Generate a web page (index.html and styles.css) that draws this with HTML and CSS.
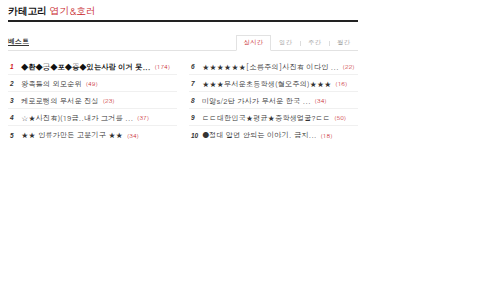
FILE: index.html
```html
<!DOCTYPE html>
<html lang="ko">
<head>
  <meta charset="UTF-8" />
  <title>카테고리 엽기&호러</title>
  <link rel="stylesheet" href="styles.css">
</head>
<body>
  <div class="wrap">
    <h1 class="cate-title">카테고리 <span class="cate-name">엽기&amp;호러</span></h1>

    <div class="best-head">
      <h2 class="best-title">베스트</h2>
      <ul class="tabs">
        <li class="tab on">실시간</li>
        <li class="tab">일간</li>
        <li class="tab">주간</li>
        <li class="tab">월간</li>
      </ul>
    </div>

    <div class="best-list">
      <ol class="col">
        <li class="row top"><em class="num">1</em><span class="subj">◆환◆공◆포◆증◆있는사람 이거 못...</span><span class="cnt">(174)</span></li>
        <li class="row"><em class="num">2</em><span class="subj">왕족들의 외모순위</span><span class="cnt">(49)</span></li>
        <li class="row"><em class="num">3</em><span class="subj">케로로뻥의 무서운 진실</span><span class="cnt">(23)</span></li>
        <li class="row"><em class="num">4</em><span class="subj">☆★사진有)(19금..내가 그거를 ...</span><span class="cnt">(37)</span></li>
        <li class="row"><em class="num">5</em><span class="subj">★★ 인류가만든 고문기구 ★★</span><span class="cnt">(34)</span></li>
      </ol>
      <ol class="col">
        <li class="row"><em class="num">6</em><span class="subj">★★★★★★[소름주의]사진有 이다인 ...</span><span class="cnt">(22)</span></li>
        <li class="row"><em class="num">7</em><span class="subj">★★★무서운초등학생(혐오주의)★★★</span><span class="cnt">(16)</span></li>
        <li class="row"><em class="num">8</em><span class="subj">미앓s/2탄 가사가 무서운 한국 ...</span><span class="cnt">(34)</span></li>
        <li class="row"><em class="num">9</em><span class="subj">ㄷㄷ대한민국★평균★중학생얼굴?ㄷㄷ</span><span class="cnt">(50)</span></li>
        <li class="row"><em class="num">10</em><span class="subj">●절대 알면 안되는 이야기. 금지...</span><span class="cnt">(18)</span></li>
      </ol>
    </div>
  </div>
</body>
</html>
```

FILE: styles.css
```css
body { margin: 0; font-family: Dotum, "Noto Sans CJK KR", "Liberation Sans", sans-serif; background: #fff; color: #333; }
ul, ol { list-style: none; margin: 0; padding: 0; }
.wrap { width: 350px; margin: 0 0 0 8px; padding-top: 5px; }

.cate-title { margin: 0; font-size: 10px; line-height: 13px; font-weight: bold; color: #111; padding-bottom: 2px; border-bottom: 2px solid #222; letter-spacing: -0.3px; }
.cate-name { color: #c8262c; font-weight: normal; }

.best-head { display: flex; justify-content: space-between; align-items: flex-end; margin-top: 13px; border-bottom: 1px solid #e2e2e2; }
.best-title { margin: 0 0 4px; font-size: 7px; line-height: 9px; font-weight: bold; color: #333; text-decoration: underline; }
.tabs { display: flex; align-items: center; margin-bottom: -1px; }
.tab { font-size: 6.5px; line-height: 14px; color: #999; padding: 0 8px; position: relative; }
.tab + .tab::before { content: ""; position: absolute; left: 0; top: 5px; width: 1px; height: 5px; background: #ddd; }
.tab.on { color: #c8262c; background: #fff; border: 1px solid #e2e2e2; border-bottom-color: #fff; padding: 0 7px; }
.tab.on + .tab::before { display: none; }

.best-list { display: flex; gap: 12px; margin-top: 7px; }
.col { width: 169px; }
.row { display: flex; align-items: center; box-sizing: border-box; height: 17px; padding-top: 1px; border-bottom: 1px solid #f0f0f0; font-size: 7.4px; white-space: nowrap; }
.row:last-child { border-bottom: none; }
.num { width: 11px; margin-left: 2px; flex: none; font-style: italic; font-weight: bold; color: #333; font-size: 6.5px; font-family: "Liberation Sans", sans-serif; }
.top .num { color: #d0141b; }
.subj { color: #333; letter-spacing: -0.1px; }
.top .subj { font-weight: bold; color: #111; }
.cnt { color: #c8262c; margin-left: 4px; font-size: 6.3px; }
```
